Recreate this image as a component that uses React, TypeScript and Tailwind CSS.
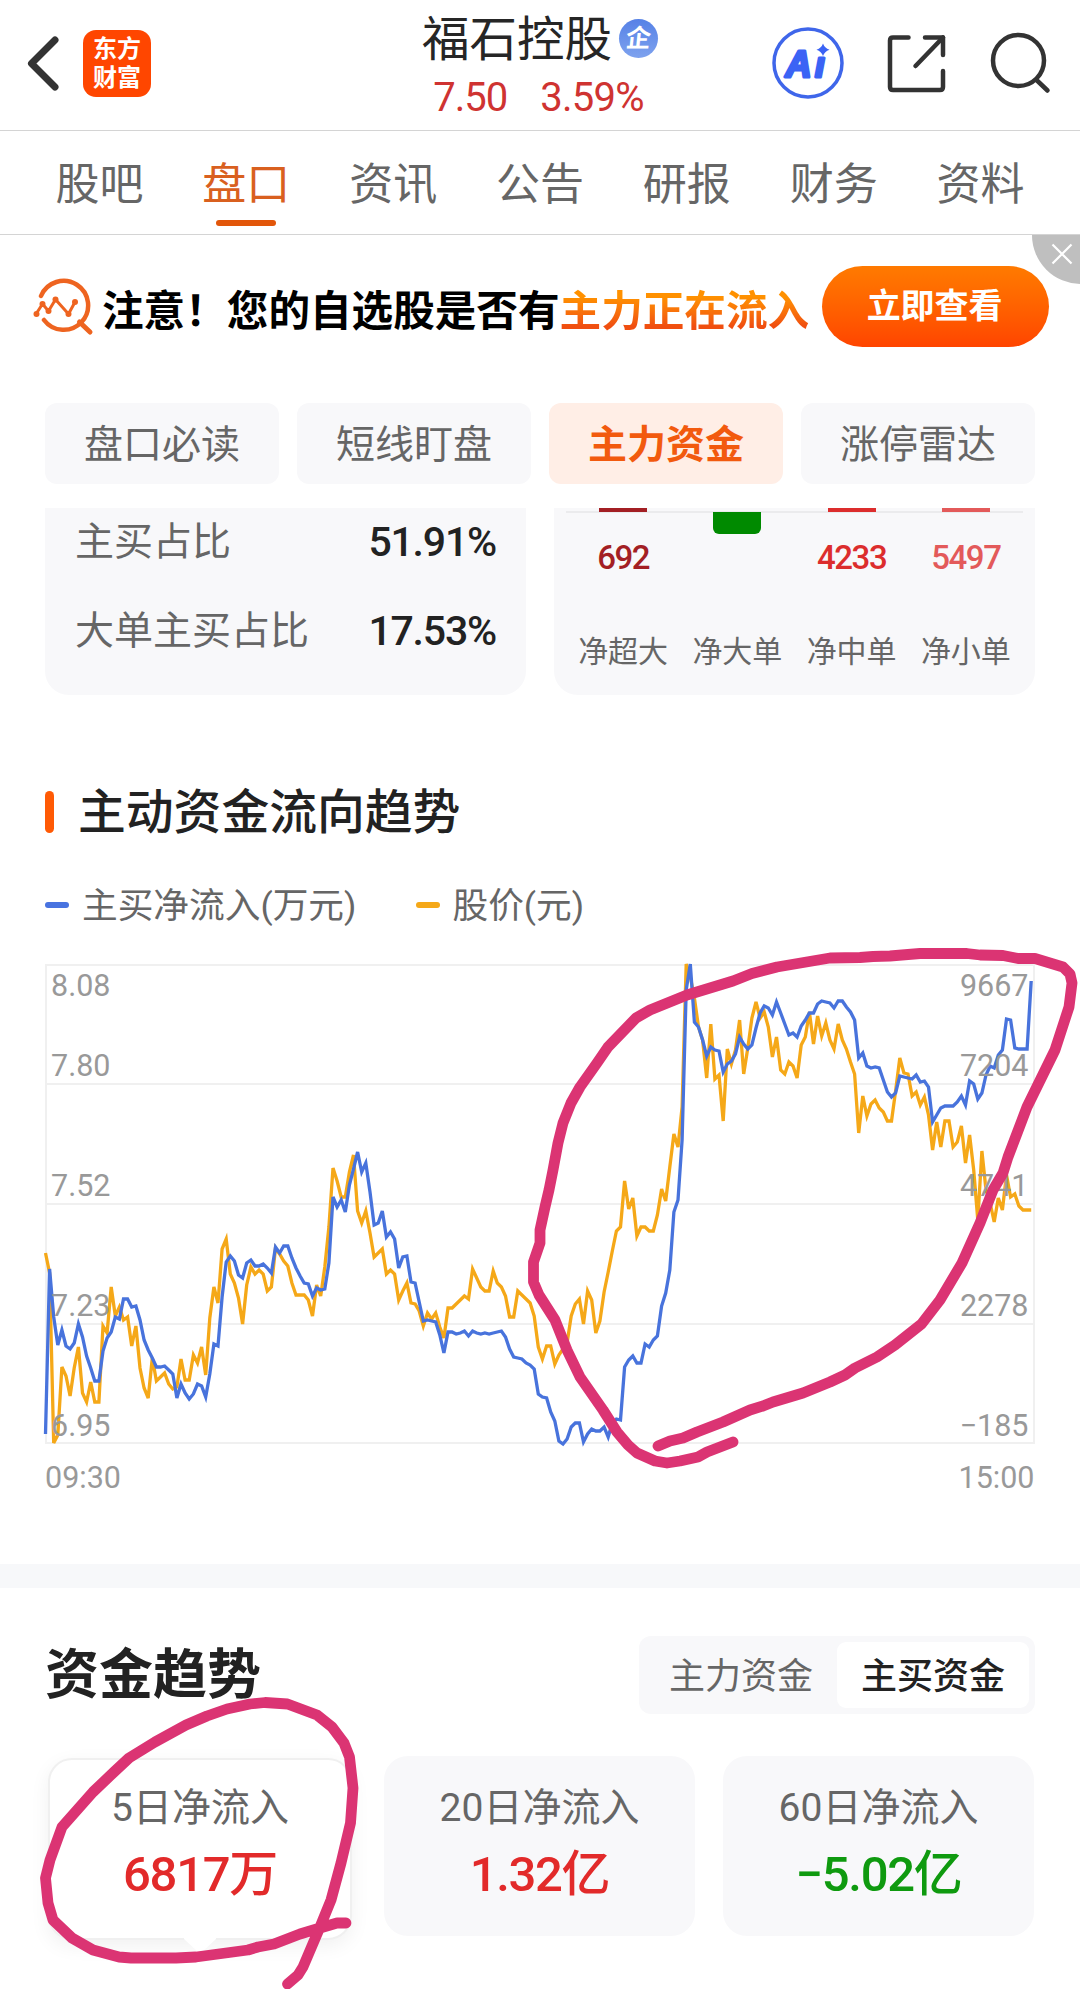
import clsx from "clsx";

const TABS = ["股吧", "盘口", "资讯", "公告", "研报", "财务", "资料"];
const CHIPS = ["盘口必读", "短线盯盘", "主力资金", "涨停雷达"];

const RATIOS = [
  { label: "主买占比", value: "51.91%" },
  { label: "大单主买占比", value: "17.53%" },
];

const ORDERS = [
  { label: "净超大", value: "692", bar: "bg-[#a31f24]", text: "text-[#a31f24]" },
  { label: "净大单", value: "", bar: "bg-[#008a00]", text: "", down: true },
  { label: "净中单", value: "4233", bar: "bg-[#dc2d2d]", text: "text-[#dc2d2d]" },
  { label: "净小单", value: "5497", bar: "bg-[#e35a5a]", text: "text-[#e35a5a]" },
];

const PERIODS = [
  { label: "5日净流入", value: "6817万", color: "text-[#e22a2a]", active: true },
  { label: "20日净流入", value: "1.32亿", color: "text-[#e22a2a]" },
  { label: "60日净流入", value: "−5.02亿", color: "text-[#0f9a0f]" },
];

// One sample per minute, 09:30 - 15:00
const PRICE = [
  313, 333, 503, 495, 427, 436, 456, 428, 407, 453, 462, 442, 462, 462, 386, 393, 347, 376, 367, 380,
  377, 406, 386, 428, 448, 458, 418, 441, 437, 433, 444, 449, 447, 419, 440, 440, 415, 423, 407, 435,
  378, 347, 363, 309, 299, 334, 343, 358, 384, 345, 327, 334, 330, 334, 351, 347, 308, 314, 321, 326,
  343, 355, 355, 355, 360, 376, 345, 356, 327, 287, 228, 241, 257, 257, 232, 215, 271, 283, 271, 293,
  317, 313, 309, 334, 330, 334, 360, 351, 343, 363, 364, 371, 386, 373, 379, 373, 387, 398, 368, 368,
  364, 360, 356, 359, 329, 338, 347, 351, 351, 331, 343, 347, 356, 377, 377, 351, 355, 359, 363, 376,
  407, 419, 406, 406, 424, 415, 409, 403, 376, 364, 359, 384, 351, 360, 393, 381, 352, 332, 311, 291,
  287, 241, 269, 258, 296, 287, 287, 291, 291, 275, 249, 261, 227, 194, 207, 167, 24, 37, 58, 87,
  100, 138, 84, 139, 135, 181, 109, 124, 110, 80, 134, 108, 78, 62, 78, 72, 87, 117, 97, 130,
  134, 122, 126, 138, 105, 97, 72, 104, 76, 96, 83, 100, 109, 84, 100, 109, 122, 134, 193, 156,
  176, 164, 160, 168, 172, 181, 181, 151, 118, 133, 134, 156, 152, 165, 157, 175, 210, 182, 207, 181,
  181, 207, 202, 186, 223, 195, 230, 280, 211, 250, 263, 282, 258, 270, 235, 257, 254, 266, 270, 270,
  270,
];

const INFLOW = [
  494, 329, 377, 405, 390, 406, 409, 403, 384, 397, 416, 428, 441, 441, 411, 398, 392, 377, 379, 359,
  359, 367, 366, 380, 400, 410, 418, 427, 427, 426, 430, 434, 458, 444, 453, 459, 454, 444, 446, 457,
  434, 404, 406, 357, 322, 316, 321, 335, 338, 323, 320, 326, 326, 324, 328, 333, 307, 313, 306, 306,
  318, 328, 336, 343, 344, 356, 348, 350, 349, 323, 257, 267, 260, 272, 245, 229, 212, 232, 223, 252,
  285, 283, 271, 297, 292, 299, 328, 317, 316, 342, 343, 362, 381, 380, 381, 382, 395, 413, 392, 392,
  394, 393, 391, 396, 391, 393, 394, 393, 394, 393, 392, 391, 397, 409, 417, 418, 419, 423, 425, 429,
  454, 457, 458, 472, 481, 501, 504, 499, 487, 483, 483, 502, 494, 489, 491, 491, 487, 497, 483, 479,
  480, 427, 420, 416, 423, 423, 404, 407, 400, 396, 366, 353, 330, 272, 260, 200, 50, 24, 82, 87,
  100, 116, 107, 110, 111, 132, 124, 121, 114, 97, 104, 109, 105, 88, 73, 66, 68, 75, 62, 73,
  84, 95, 93, 97, 86, 80, 73, 73, 64, 61, 62, 63, 68, 61, 61, 67, 72, 80, 118, 113,
  126, 128, 127, 128, 140, 152, 157, 153, 136, 137, 138, 139, 135, 142, 141, 147, 182, 175, 168, 166,
  166, 166, 162, 156, 165, 141, 144, 159, 153, 135, 126, 128, 115, 110, 79, 80, 108, 109, 109, 109,
  41,
];

const GRID = [
  { y: 25, price: "8.08", flow: "9667", label: 56 },
  { y: 144, price: "7.80", flow: "7204", label: 136 },
  { y: 264, price: "7.52", flow: "4741", label: 256 },
  { y: 384, price: "7.23", flow: "2278", label: 376 },
  { y: 503, price: "6.95", flow: "−185", label: 496 },
];

const toPoints = (values: number[]) =>
  values.map((y, i) => `${(45.5 + i * 4.107).toFixed(1)},${y}`).join(" ");

function Header() {
  return (
    <header className="flex h-[131px] border-b border-[#d4d4d4]">
      <div className="flex w-[360px] items-start pl-[25px] pt-[30px]">
        <svg className="mt-[5px] h-[58px] w-[36px]" viewBox="0 0 36 58" fill="none">
          <path d="M30 5 L6.500 28.500 L30 52" stroke="#333" strokeWidth="7" strokeLinecap="round" strokeLinejoin="round" />
        </svg>
        <div className="ml-[22px] flex h-[67px] w-[68px] flex-col items-center justify-center rounded-[13px] bg-[#ff4600] text-[24px] font-bold leading-[29px] text-white">
          <span>东方</span>
          <span>财富</span>
        </div>
      </div>
      <div className="flex w-[360px] flex-col items-center pt-[12px]">
        <div className="flex items-center">
          <h1 className="text-[47.500px] leading-[56px] text-[#262626]">福石控股</h1>
          <span className="mb-[3px] ml-[7px] flex h-[39px] w-[39px] items-center justify-center rounded-full bg-gradient-to-b from-[#5681e6] to-[#7ea2ee] text-[25px] font-bold leading-none text-white">
            <span className="-skew-x-6">企</span>
          </span>
        </div>
        <div className="mt-[6px] flex gap-[33px] text-[40px] leading-[48px] tracking-[-1px] text-[#cf3331]">
          <span className="-ml-[3px]">7.50</span>
          <span className="tracking-[-0.8px]">3.59%</span>
        </div>
      </div>
      <div className="flex w-[360px] items-start pt-[26px]">
        <svg className="ml-[51px] h-[74px] w-[74px]" viewBox="0 0 74 74" fill="none">
          <circle cx="37" cy="37" r="34" stroke="#3f66ea" strokeWidth="3.500" />
          <g
            fill="#3b63f5"
            stroke="#3b63f5"
            strokeWidth="3"
            strokeLinejoin="round"
            fontFamily="Liberation Sans"
            fontWeight="700"
            fontStyle="italic"
          >
            <text x="14.500" y="50.500" fontSize="36">A</text>
            <text x="44" y="51" fontSize="35">ı</text>
          </g>
          <path d="M52 17.500 Q53.500 22 58.500 23.800 Q53.500 25.500 52 30 Q50.500 25.500 45.500 23.800 Q50.500 22 52 17.500 Z" fill="#3b63f5" />
        </svg>
        <svg className="ml-[42px] mt-[8px] h-[60px] w-[60px]" viewBox="0 0 60 60" fill="none" stroke="#333" strokeWidth="4.500" strokeLinecap="round" strokeLinejoin="round">
          <path d="M21.500 3.500 H6 Q3 3.500 3 6.500 V53 Q3 56 6 56 H53 Q56 56 56 53 V37" />
          <path d="M38 3.500 H56 V21" />
          <path d="M56 3.500 L28.500 32" />
        </svg>
        <svg className="ml-[43px] mt-[6px] h-[62px] w-[62px]" viewBox="0 0 62 62" fill="none" stroke="#333" strokeWidth="4.500" strokeLinecap="round">
          <circle cx="28.500" cy="28.500" r="25.500" />
          <path d="M46.500 48 L57.500 58.500" />
        </svg>
      </div>
    </header>
  );
}

function TabBar() {
  return (
    <nav className="flex h-[104px] border-b border-[#d4d4d4] px-[26px]">
      {TABS.map((tab) => {
        const active = tab === "盘口";
        return (
          <div key={tab} className="flex flex-1 flex-col items-center pt-[26px]">
            <span className={clsx("text-[44px] leading-[56px]", active ? "text-[#d9601f]" : "text-[#666]")}>{tab}</span>
            {active && <span className="mt-[7px] h-[6px] w-[60px] rounded-full bg-[#e2560a]" />}
          </div>
        );
      })}
    </nav>
  );
}

function Banner() {
  return (
    <section className="relative flex h-[149px] items-start overflow-hidden pl-[33px] pt-[31px]">
      <svg className="mt-[12px] h-[58px] w-[62px]" viewBox="0 0 62 58" fill="none" stroke="#ee6420" strokeWidth="4.500" strokeLinecap="round" strokeLinejoin="round">
        <path d="M8 18 A24.500 24.500 0 1 1 11 42" />
        <path d="M46.500 44 L57 54" strokeWidth="5" />
        <path d="M3 36 L9.500 26 L15.500 33 L22.500 21.500 L35.500 36 L42 24" strokeWidth="3" />
        <g fill="#ee6420" stroke="none">
          <circle cx="3.500" cy="36" r="3" />
          <circle cx="9.500" cy="26" r="3" />
          <circle cx="15.500" cy="33" r="3" />
          <circle cx="22.500" cy="21.500" r="3" />
          <circle cx="35.500" cy="36" r="3" />
          <circle cx="42" cy="24" r="3" />
        </g>
      </svg>
      <p className="ml-[7px] mt-[16px] whitespace-nowrap text-[41.600px] font-bold leading-[60px] text-black">
        注意！您的自选股是否有
        <span className="bg-gradient-to-b from-[#ff9100] from-20% to-[#f04e10] to-80% bg-clip-text text-transparent">主力正在流入</span>
      </p>
      <button className="ml-[13px] h-[81px] w-[227px] rounded-full bg-gradient-to-b from-[#ff7a00] to-[#ff4400] pb-[1px] pr-[2px] text-[34px] font-bold text-white">
        立即查看
      </button>
      <div className="absolute -top-[49px] left-[1032px] h-[98px] w-[98px] rounded-full bg-[#bfbfbf]">
        <svg className="ml-[18px] mt-[56px] h-[24px] w-[24px]" viewBox="0 0 24 24" stroke="#fff" strokeWidth="2.200">
          <path d="M2.500 2.500 L21.500 21.500 M21.500 2.500 L2.500 21.500" />
        </svg>
      </div>
    </section>
  );
}

function FundFlowCards() {
  return (
    <section className="px-[45px]">
      <div className="mt-[19px] grid grid-cols-4 gap-[18px]">
        {CHIPS.map((chip) => (
          <div
            key={chip}
            className={clsx(
              "flex h-[81px] items-center justify-center rounded-[12px] pt-[4px] text-[39px]",
              chip === "主力资金" ? "bg-[#ffeee6] font-bold text-[#f25a0e]" : "bg-[#f8f8fa] text-[#666]"
            )}
          >
            {chip}
          </div>
        ))}
      </div>

      <div className="mt-[24px] flex justify-between">
        <div className="h-[187px] w-[481px] rounded-b-[24px] bg-[#f8f8fa] pl-[30px] pr-[30px] pt-[2px]">
          {RATIOS.map((row) => (
            <div key={row.label} className="mb-[25px] flex h-[64px] items-center justify-between">
              <span className="text-[39px] leading-[64px] text-[#666]">{row.label}</span>
              <span className="text-[41px] font-medium leading-[64px] tracking-[-1.200px] text-[#222]">{row.value}</span>
            </div>
          ))}
        </div>

        <div className="h-[187px] w-[481px] rounded-b-[24px] bg-[#f8f8fa] px-[12px]">
          <div className="relative grid grid-cols-4">
            <div className="absolute inset-x-0 top-[3px] h-[2px] bg-[#ebebed]" />
            {ORDERS.map((order) => (
              <div key={order.label} className="relative flex flex-col items-center">
                <div className="h-[26px]">
                  <div className={clsx("w-[48px]", order.bar, order.down ? "mt-[4px] h-[22px] rounded-b-[6px]" : "h-[4px]")} />
                </div>
                <div className={clsx("mt-[2px] h-[44px] text-[33px] font-medium leading-[44px] tracking-[-1.500px]", order.text)}>
                  {order.value}
                </div>
                <div className="mt-[50px] text-[30px] leading-[44px] text-[#666]">{order.label}</div>
              </div>
            ))}
          </div>
        </div>
      </div>
    </section>
  );
}

function TrendChart() {
  return (
    <section>
      <div className="mt-[87px] flex h-[60px] items-center pl-[45px]">
        <span className="h-[42px] w-[9px] rounded-full bg-[#ff5a05]" />
        <h2 className="ml-[24px] mt-[2px] text-[47.800px] font-medium leading-[60px] text-[#222]">主动资金流向趋势</h2>
      </div>
      <div className="mt-[38px] flex h-[50px] items-center pl-[45px] text-[35.700px] leading-[50px] text-[#666]">
        <span className="mr-[13px] h-[6px] w-[24px] rounded-full bg-[#4873e0]" />
        <span className="mt-[1px]">主买净流入(万元)</span>
        <span className="ml-[60px] mr-[12px] h-[6px] w-[24px] rounded-full bg-[#f5a818]" />
        <span className="mt-[1px]">股价(元)</span>
      </div>
      <svg className="mt-[10px] block h-[560px] w-[1080px]" viewBox="0 0 1080 560" fill="none">
        <g stroke="#f0f0f0" strokeWidth="2">
          {GRID.map((row) => (
            <path key={row.y} d={`M45 ${row.y} H1035`} />
          ))}
          <path d="M46 25 V503 M1034 25 V503" />
        </g>
        <polyline points={toPoints(PRICE)} stroke="#f5a818" strokeWidth="3.300" />
        <polyline points={toPoints(INFLOW)} stroke="#4873dc" strokeWidth="3.300" />
        <g fill="#999" fontSize="30.500">
          {GRID.map((row) => (
            <g key={row.y}>
              <text x="51" y={row.label}>{row.price}</text>
              <text x="1028.500" y={row.label} textAnchor="end">{row.flow}</text>
            </g>
          ))}
          <text x="45" y="548">09:30</text>
          <text x="1034.500" y="548" textAnchor="end">15:00</text>
        </g>
      </svg>
    </section>
  );
}

function PeriodSummary() {
  return (
    <section className="px-[45px]">
      <div className="mt-[48px] flex h-[78px] items-center justify-between">
        <h2 className="pt-[2px] text-[54px] font-bold leading-[78px] text-[#222]">资金趋势</h2>
        <div className="flex h-[78px] w-[396px] items-center rounded-[12px] bg-[#f8f8fa] p-[6px] text-[36px]">
          <span className="flex-1 pt-[3px] text-center text-[#666]">主力资金</span>
          <span className="flex h-[66px] w-[192px] items-center justify-center rounded-[9px] bg-white pt-[3px] font-medium text-[#222]">主买资金</span>
        </div>
      </div>
      <div className="mt-[42px] flex gap-[28px]">
        {PERIODS.map((item) => (
          <div
            key={item.label}
            className={clsx(
              "relative flex shrink-0 flex-col items-center rounded-[24px]",
              item.active
                ? "ml-[3px] mr-[4px] mt-[2px] h-[182px] w-[304px] border-2 border-[#f0f0f0] bg-white pt-[20px] shadow-[0_6px_20px_rgba(0,0,0,0.06)]"
                : "h-[180px] w-[311px] bg-[#f8f8fa] pt-[24px]"
            )}
          >
            <div className="text-[39px] leading-[56px] text-[#666]">{item.label}</div>
            <div className={clsx("mt-[6px] text-[49px] font-medium leading-[66px] tracking-[-1.300px]", item.color)}>{item.value}</div>
            {item.active && (
              <svg className="absolute left-[134px] top-[177px] h-[18px] w-[32px]" viewBox="0 0 32 18">
                <path d="M0 2 L13 14 Q16 16.500 19 14 L32 2 V0 H0 Z" fill="#fff" />
              </svg>
            )}
          </div>
        ))}
      </div>
    </section>
  );
}

// Hand-drawn marker strokes lying over the page
function MarkerStrokes() {
  return (
    <svg
      className="pointer-events-none absolute left-0 top-0 h-[1989px] w-[1080px]"
      viewBox="0 0 1080 1989"
      fill="none"
      stroke="#db3473"
      strokeWidth="10.800"
      strokeLinecap="round"
      strokeLinejoin="round"
    >
      <path d="M733 1442 L707 1452 L698 1457 L680 1461 L667 1463 L655 1461 L637 1453 L628 1445 L617 1432 L603 1410 L580 1377 L567 1350 L555 1320 L539 1295 L533.500 1282 V1262 L540 1243 V1230 L545 1207 L549 1190 L553 1170 L558 1143 L563 1123 L571 1103 L580 1087 L597 1063 L608 1047 L636 1018 L650 1010 L687 995 L733 981 L752 973.500 L777 967 L830 958 L860 957.500 L873 956.500 L890 956 L920 953.500 L967 953.500 L980 955 L1003 955.500 L1018 958.500 L1035 958.500 L1063 967 L1070 974 L1072 983 L1069 1007 L1055 1050 L1027 1107 L1008 1157 L1003 1173 L993 1190 L980 1223 L962 1263 L940 1300 L921.500 1324 L895 1345 L877 1357 L855 1368 L845 1375 L830 1382 L803 1393 L773 1402 L763 1406 L750 1410 L723 1422 L697 1432 L683 1438 L670 1441 L658 1446" />
      <path d="M346 1923 H337 L320 1928 L300 1934 L274 1944 L258 1947 L248 1950 L196 1957 L176 1958 H131 L119 1957 L93 1950 L72 1938 L53 1920 L48 1903 L45.500 1878 L50 1860 L62 1827 L93 1792 L114 1772 L129 1758 L155 1742 L186 1725 L207 1716 L227 1709 L250 1704 L265 1702.500 L287.500 1704 L317 1715 L332 1727 L344 1743 L349.500 1757 L353 1788 L350.500 1823 L341 1863 L331 1900 L320 1927 L303 1967 L298 1975 L287.500 1984" />
    </svg>
  );
}

export default function App() {
  return (
    <div className="relative h-[1989px] w-[1080px] overflow-hidden bg-white font-['Roboto','Noto_Sans_CJK_SC',sans-serif]">
      <Header />
      <TabBar />
      <Banner />
      <FundFlowCards />
      <TrendChart />
      <div className="mt-[64px] h-[24px] bg-[#f7f8fa]" />
      <PeriodSummary />
      <MarkerStrokes />
    </div>
  );
}
